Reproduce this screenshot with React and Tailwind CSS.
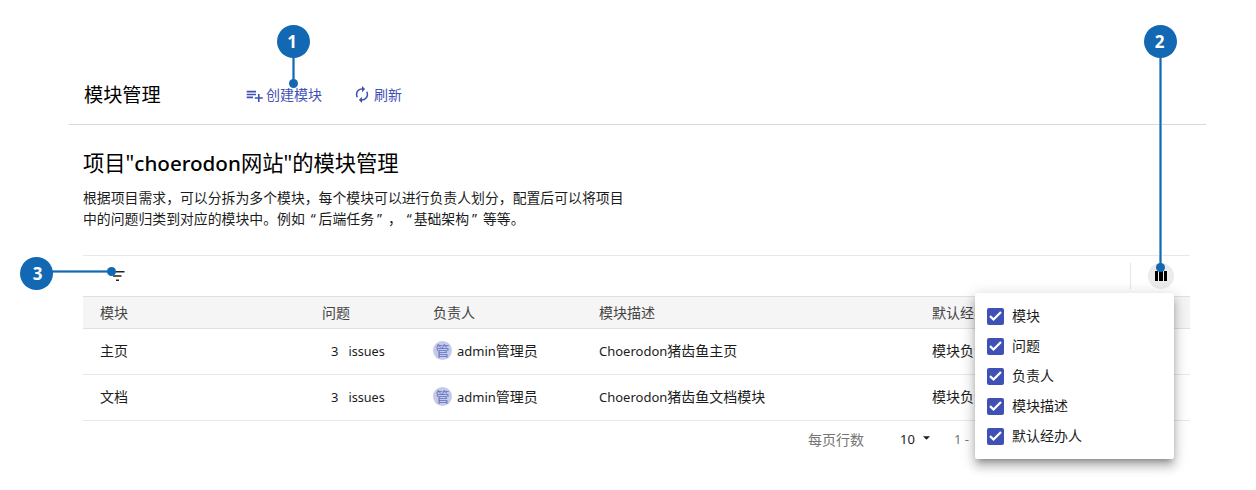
import React from "react";

const columns = ["模块", "问题", "负责人", "模块描述", "默认经办人"];

const rows = [
  { name: "主页", desc: "猪齿鱼主页" },
  { name: "文档", desc: "猪齿鱼文档模块" },
];

function Marker({ n, className }) {
  return (
    <div
      className={`absolute flex h-[33px] w-[33px] items-center justify-center rounded-full bg-[#1268b3] text-[17px] leading-none font-bold text-white ${className}`}
    >
      {n}
    </div>
  );
}

function Open() {
  return <span className="inline-block w-[13.87px] pr-[3px] text-right">“</span>;
}

function Close() {
  return <span className="inline-block w-[13.87px] pl-[3px] text-left">”</span>;
}

function Row({ name, desc }) {
  return (
    <div className="flex h-[46px] items-center border-b border-[#e8e8e8] pb-px pl-[17px]">
      <div className="w-[231px]">{name}</div>
      <div className="w-[102px] text-[13px] whitespace-pre">
        3<span className="ml-[10px] text-[12.6px]">issues</span>
      </div>
      <div className="flex w-[166px] items-center">
        <span className="mb-px flex h-[19px] w-[19px] items-center justify-center rounded-full bg-[#c5cae9] text-[14px] leading-none text-[#6473c3]">
          管
        </span>
        <span className="ml-[5px]">
          <span className="text-[13px]">admin</span>管理员
        </span>
      </div>
      <div className="w-[333px]">
        <span className="text-[13px]">Choerodon</span>
        {desc}
      </div>
      <div>模块负责人</div>
    </div>
  );
}

export default function App() {
  return (
    <div className="relative h-[490px] w-[1256px] overflow-hidden bg-white font-['Noto_Sans','Noto_Sans_CJK_SC',sans-serif] text-[14px] leading-[20px] text-[#1c1c1c]">
      <header className="ml-[69px] flex h-[125px] w-[1137px] items-end border-b border-[#d9d9d9] pb-[19px] pl-[15px]">
        <h1 className="-mb-px w-[161px] text-[19.2px] leading-[22px] text-black">模块管理</h1>
        <button className="flex w-[109px] items-center text-[#3f51b5]">
          <svg className="mr-[4px] mb-px h-[14px] w-[18px]" viewBox="0 0 18 14" fill="none" stroke="currentColor" strokeWidth="1.6">
            <path d="M1.7 3.6H11M1.7 6.5H11M1.7 9.4H8M13.8 6v8M9.8 10h8" />
          </svg>
          <span className="-ml-px">创建模块</span>
        </button>
        <button className="flex items-center text-[#3f51b5]">
          <svg className="mr-[4px] mb-[2px] h-[17px] w-[16px]" viewBox="3 1 18 22" fill="currentColor">
            <path d="M12 6v3l4-4-4-4v3c-4.42 0-8 3.58-8 8 0 1.57.46 3.03 1.24 4.26L6.7 14.8A5.87 5.87 0 0 1 6 12c0-3.31 2.69-6 6-6zm6.76 1.74L17.3 9.2c.44.84.7 1.79.7 2.8 0 3.31-2.69 6-6 6v-3l-4 4 4 4v-3c4.42 0 8-3.58 8-8 0-1.57-.46-3.03-1.24-4.26z" />
          </svg>
          刷新
        </button>
      </header>

      <main className="ml-[83px] w-[1107px]">
        <h2 className="pt-[23px] text-[21.3px] leading-[30px] whitespace-nowrap text-black">
          项目"<span className="text-[20.6px] font-medium">choerodon</span>网站"的模块管理
        </h2>
        <p className="mt-[9px] text-[13.87px] leading-[21px] whitespace-nowrap">
          根据项目需求，可以分拆为多个模块，每个模块可以进行负责人划分，配置后可以将项目
          <br />
          中的问题归类到对应的模块中。例如
          <Open />
          后端任务
          <Close />，
          <span className="-mr-px -ml-px inline-block">
            <Open />
          </span>
          基础架构
          <Close />
          等等。
        </p>

        <div className="mt-[26px] flex h-[41px] items-center justify-between border-t border-[#e8e8e8] pr-[16px] pl-[27px]">
          <svg className="h-[16px] w-[15px]" viewBox="0 0 15 16" fill="none" stroke="#222" strokeWidth="1.6">
            <path d="M0 3.8h14.5M3 8h8.5M6 12.2h3" />
          </svg>
          <div className="flex items-center">
            <div className="mr-[17px] h-[26px] w-px bg-[#e5e5e5]" />
            <div className="flex h-[26px] w-[26px] items-center justify-center gap-px rounded-full bg-[#ebebeb]">
              <div className="h-[10px] w-[3px] bg-black" />
              <div className="h-[10px] w-[4px] bg-black" />
              <div className="h-[10px] w-[3px] bg-black" />
            </div>
          </div>
        </div>

        <div className="flex h-[33px] items-center border-y border-[#e0e0e0] bg-[#f5f5f5] pl-[17px] text-[#444]">
          <div className="w-[222px]">模块</div>
          <div className="w-[111px]">问题</div>
          <div className="w-[166px]">负责人</div>
          <div className="w-[333px]">模块描述</div>
          <div>默认经办人</div>
        </div>
        {rows.map((r) => (
          <Row key={r.name} {...r} />
        ))}

        <footer className="flex h-[38px] items-center pl-[725px] text-[#757575]">
          <span className="w-[92px]">每页行数</span>
          <span className="mb-[2px] text-[13px] text-[#1c1c1c]">10</span>
          <svg className="mr-[23px] mb-[5px] ml-[8px] h-[4px] w-[7px]" viewBox="0 0 8 4" fill="#1c1c1c">
            <path d="M0 0h8L4 4z" />
          </svg>
          <span className="mb-[2px] ml-px text-[13px] whitespace-pre">1 -  2</span>
        </footer>
      </main>

      <div className="absolute top-[293px] left-[975px] flex h-[166px] w-[199px] flex-col rounded-[2px] bg-white pt-[8px] pl-[12px] shadow-[0_5px_6px_-3px_rgba(0,0,0,0.3),0_3px_14px_2px_rgba(0,0,0,0.15),0_8px_10px_1px_rgba(0,0,0,0.14)]">
        {columns.map((c) => (
          <label key={c} className="flex h-[29.9px] items-center">
            <span className="mt-px mr-[8px] flex h-[17px] w-[17px] items-center justify-center rounded-[2px] bg-[#3f51b5]">
              <svg className="h-[12px] w-[13px]" viewBox="0 0 13 12" fill="none" stroke="white" strokeWidth="2.3">
                <path d="M1 6.2l3.5 3.3L12 2" />
              </svg>
            </span>
            {c}
          </label>
        ))}
      </div>

      <div className="absolute top-[55px] left-[292px] h-[26px] w-[3px] border-x border-[#6ea2d0] bg-[#1268b3]" />
      <div className="absolute top-[79px] left-[289px] h-[9px] w-[9px] rounded-full bg-[#1268b3]" />
      <Marker n="1" className="top-[25px] left-[277px] pr-[3px]" />
      <div className="absolute top-[55px] left-[1159px] h-[210px] w-[3px] border-x border-[#6ea2d0] bg-[#1268b3]" />
      <div className="absolute top-[263px] left-[1156px] h-[9px] w-[9px] rounded-full bg-[#1268b3]" />
      <Marker n="2" className="top-[25px] left-[1144px] pr-[2px]" />
      <div className="absolute top-[270px] left-[50px] h-[3px] w-[60px] border-y border-[#6ea2d0] bg-[#1268b3]" />
      <div className="absolute top-[267px] left-[107px] h-[9px] w-[9px] rounded-full bg-[#1268b3]" />
      <Marker n="3" className="top-[257px] left-[20px] pl-[2px]" />
    </div>
  );
}
